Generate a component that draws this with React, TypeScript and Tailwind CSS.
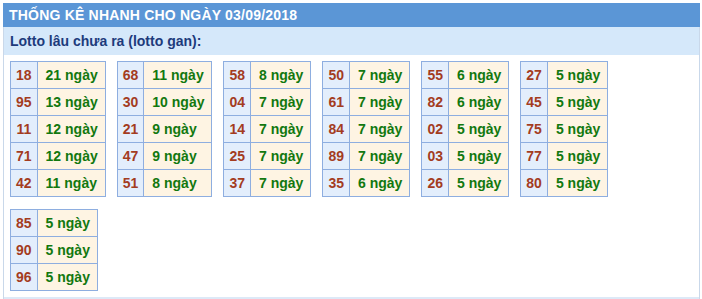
const groups: [string, string][][] = [
  [['18', '21'], ['95', '13'], ['11', '12'], ['71', '12'], ['42', '11']],
  [['68', '11'], ['30', '10'], ['21', '9'], ['47', '9'], ['51', '8']],
  [['58', '8'], ['04', '7'], ['14', '7'], ['25', '7'], ['37', '7']],
  [['50', '7'], ['61', '7'], ['84', '7'], ['89', '7'], ['35', '6']],
  [['55', '6'], ['82', '6'], ['02', '5'], ['03', '5'], ['26', '5']],
  [['27', '5'], ['45', '5'], ['75', '5'], ['77', '5'], ['80', '5']],
  [['85', '5'], ['90', '5'], ['96', '5']],
];

function GanTable({ rows }: { rows: [string, string][] }) {
  return (
    <table className="border-collapse text-[14px] font-bold leading-[14px]">
      <tbody>
        {rows.map(([num, days]) => (
          <tr key={num}>
            <td className="border border-[#8eaee0] bg-[#e3eefc] px-[5px] py-[6px] text-center text-[#a33c1f]">
              {num}
            </td>
            <td className="border border-[#8eaee0] bg-[#fef4e3] pl-[8px] pr-[7px] py-[6px] text-[#12780f]">
              {days} ngày
            </td>
          </tr>
        ))}
      </tbody>
    </table>
  );
}

export default function App() {
  return (
    <div className="bg-white pl-[3px] pt-[3px] w-[702px] h-[299px] overflow-hidden font-['Liberation_Sans',Arial,sans-serif]">
      <div className="w-[697px]">
        <div className="h-[24px] bg-[#5b96d6] pl-[6px] flex items-center text-[14px] font-bold text-white tracking-[0.2px]">
          THỐNG KÊ NHANH CHO NGÀY 03/09/2018
        </div>
        <div className="border-x border-[#c9d8ea]">
          <div className="h-[28px] bg-[#d5e8fa] pl-[6px] flex items-center text-[14px] font-bold text-[#1d3b7c]">
            Lotto lâu chưa ra (lotto gan):
          </div>
          <div className="flex flex-col gap-[12px] pl-[6px] pt-[6px] pb-[6px]">
            <div className="flex items-start gap-[11px]">
              {groups.slice(0, 6).map((rows, i) => (
                <GanTable key={i} rows={rows} />
              ))}
            </div>
            <div className="flex items-start gap-[11px]">
              <GanTable rows={groups[6]} />
            </div>
          </div>
          <div className="h-[8px] bg-[#dde9f7]" />
        </div>
      </div>
    </div>
  );
}
